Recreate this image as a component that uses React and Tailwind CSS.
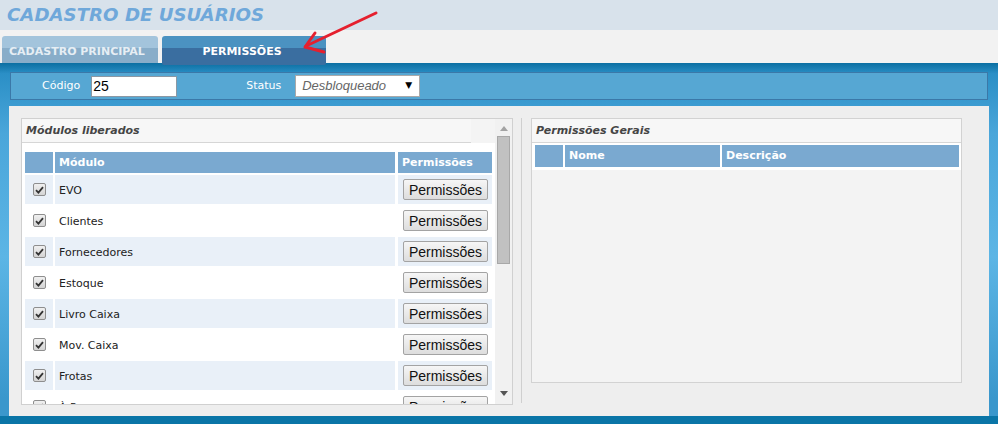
import React from 'react';

const modules = ['EVO', 'Clientes', 'Fornecedores', 'Estoque', 'Livro Caixa', 'Mov. Caixa', 'Frotas', 'À Pagar'];

const CheckBox = () => (
  <div className="w-[13px] h-[13px] rounded-[2px] border border-[#8e8e8e] bg-gradient-to-b from-[#f0f0f0] to-[#d4d4d4] flex items-center justify-center">
    <svg width="9" height="8" viewBox="0 0 9 8">
      <path d="M1 4.2 L3.4 6.6 L8 1.2" fill="none" stroke="#333" strokeWidth="1.8" />
    </svg>
  </div>
);

const PermButton = () => (
  <button className="ml-[5px] w-[85px] h-[21px] rounded-[2px] border border-[#a3a3a3] bg-gradient-to-b from-[#f6f6f6] to-[#dddddd] text-[14px] leading-none text-[#111] font-['Liberation_Sans',Arial,sans-serif]">
    Permissões
  </button>
);

export default function App() {
  return (
    <div className="relative w-[998px] h-[424px] overflow-hidden bg-[#f2f2f2] font-['DejaVu_Sans',Verdana,sans-serif]">
      {/* header */}
      <div className="h-[30px] bg-[#d8e2eb] pl-[7px] pt-[4px]">
        <h1 className="text-[18.2px] leading-[22px] font-bold italic text-[#6fa8da]">CADASTRO DE USUÁRIOS</h1>
      </div>

      {/* tabs */}
      <div className="h-[33px] pt-[6px] pl-[2px] flex gap-[4px]">
        <div className="w-[156px] h-[27px] rounded-t-[3px] bg-[linear-gradient(#a3c4dc_0%,#a3c4dc_45%,#88adc9_45%,#88adc9_100%)] flex items-start pl-[7px] pt-[9px]">
          <span className="text-[11px] leading-[14px] font-bold text-[#e6eef4]">CADASTRO PRINCIPAL</span>
        </div>
        <div className="relative z-10 w-[164px] h-[29px] rounded-t-[3px] rounded-b-[2px] bg-[linear-gradient(#4b92c1_0%,#4b92c1_42%,#3a6ea0_42%,#3a6ea0_100%)] flex items-start justify-center pt-[9px] pr-[4px]">
          <span className="text-[11px] leading-[14px] font-bold text-white">PERMISSÕES</span>
        </div>
      </div>

      {/* main blue frame */}
      <div className="h-[361px] bg-[linear-gradient(#0b6fa2_0%,#2b8fc6_3%,#4aa6da_20%,#5cb5e5_55%,#3a97cc_95%)] border-b-[8px] border-[#0a75a7] px-[9px] pt-[9px] flex flex-col">
        <div className="mx-[1px] h-[28px] bg-[#56a7d3] border border-[#3b78a8] flex items-center">
          <span className="ml-[31px] text-[11px] text-white">Código</span>
          <div className="ml-[11px] w-[86px] h-[21px] bg-white border border-[#8b98a4] flex items-center pl-[1px]">
            <span className="text-[14px] text-black font-['Liberation_Sans',Arial,sans-serif]">25</span>
          </div>
          <span className="ml-[69px] text-[11px] text-white">Status</span>
          <div className="ml-[14px] w-[125px] h-[22px] bg-white border border-[#a9a9a9] flex items-center justify-between pl-[6px] pr-[7px]">
            <span className="text-[13px] italic text-[#666] font-['Liberation_Sans',Arial,sans-serif]">Desbloqueado</span>
            <span className="text-[9px] text-black">▼</span>
          </div>
        </div>

        <div className="mt-[6px] h-[310px] bg-[#eeeeee] flex items-start pl-[12px] pt-[12px]">
          {/* left panel */}
          <div className="w-[492px] h-[287px] border border-[#d0d0d0] bg-white flex overflow-hidden">
            <div className="w-[473px] h-full overflow-hidden">
              <div className="h-[24px] bg-[#f4f4f4]">
                <div className="w-[449px] h-[24px] bg-[#f7f7f7] border-b border-[#d6d6d6] flex items-center pl-[4px] pt-[2px]">
                  <span className="text-[11px] font-bold italic text-[#454545]">Módulos liberados</span>
                </div>
              </div>
              <div className="pl-[3px] pt-[9px] flex flex-col gap-[2px]">
                <div className="flex h-[21px] text-[11px] font-bold text-white">
                  <div className="w-[28px] bg-[#7aa9d0]" />
                  <div className="ml-[2px] w-[340px] bg-[#7aa9d0] flex items-center pl-[4px] pt-[1px]">Módulo</div>
                  <div className="ml-[3px] w-[94px] bg-[#7aa9d0] flex items-center pl-[4px] pt-[1px]">Permissões</div>
                </div>
                {modules.map((m, i) => {
                  const bg = i % 2 === 0 ? 'bg-[#e9f0f8]' : 'bg-white';
                  return (
                    <div key={m} className="flex h-[29px] shrink-0 text-[11px] text-[#222]">
                      <div className={`w-[28px] ${bg} flex items-center justify-center`}>
                        <CheckBox />
                      </div>
                      <div className={`ml-[2px] w-[340px] ${bg} flex items-center pl-[4px] pt-[3px]`}>{m}</div>
                      <div className={`ml-[3px] w-[94px] ${bg} flex items-center`}>
                        <PermButton />
                      </div>
                    </div>
                  );
                })}
              </div>
            </div>
            {/* scrollbar */}
            <div className="w-[17px] h-full bg-[#f1f1f1] flex flex-col items-center">
              <div className="h-[17px] flex items-center justify-center pt-[2px]">
                <svg width="8" height="5" viewBox="0 0 8 5"><path d="M0 5 L4 0 L8 5 Z" fill="#a3a3a3" /></svg>
              </div>
              <div className="w-[13px] h-[128px] bg-[#c1c1c1] border border-[#a8a8a8]" />
              <div className="flex-1" />
              <div className="h-[17px] flex items-center justify-center pb-[4px]">
                <svg width="8" height="5" viewBox="0 0 8 5"><path d="M0 0 L8 0 L4 5 Z" fill="#555" /></svg>
              </div>
            </div>
          </div>

          {/* separator */}
          <div className="ml-[8px] w-px h-[285px] bg-[#cfcfcf]" />

          {/* right panel */}
          <div className="ml-[9px] w-[431px] h-[265px] border border-[#d2d2d2] bg-[#f3f3f3]">
            <div className="h-[24px] bg-[#f7f7f7] border-b border-[#d6d6d6] flex items-center pl-[4px] pt-[2px]">
              <span className="text-[11px] font-bold italic text-[#454545]">Permissões Gerais</span>
            </div>
            <div className="bg-white p-[2px] pb-[3px] flex gap-[2px] text-[11px] font-bold text-white">
              <div className="ml-px w-[28px] h-[22px] bg-[#7aa9d0]" />
              <div className="w-[155px] h-[22px] bg-[#7aa9d0] flex items-center pl-[4px] pt-[1px]">Nome</div>
              <div className="flex-1 h-[22px] bg-[#7aa9d0] flex items-center pl-[4px] pt-[1px]">Descrição</div>
            </div>
          </div>
        </div>
      </div>

      {/* red arrow annotation */}
      <svg className="absolute left-0 top-0 z-20 pointer-events-none" width="998" height="424">
        <g stroke="#e5202e" strokeWidth="3" strokeLinecap="round" fill="none">
          <path d="M376 13 L306 46" />
          <path d="M315 33 L305 47 L324 52" strokeLinejoin="round" />
        </g>
      </svg>
    </div>
  );
}
